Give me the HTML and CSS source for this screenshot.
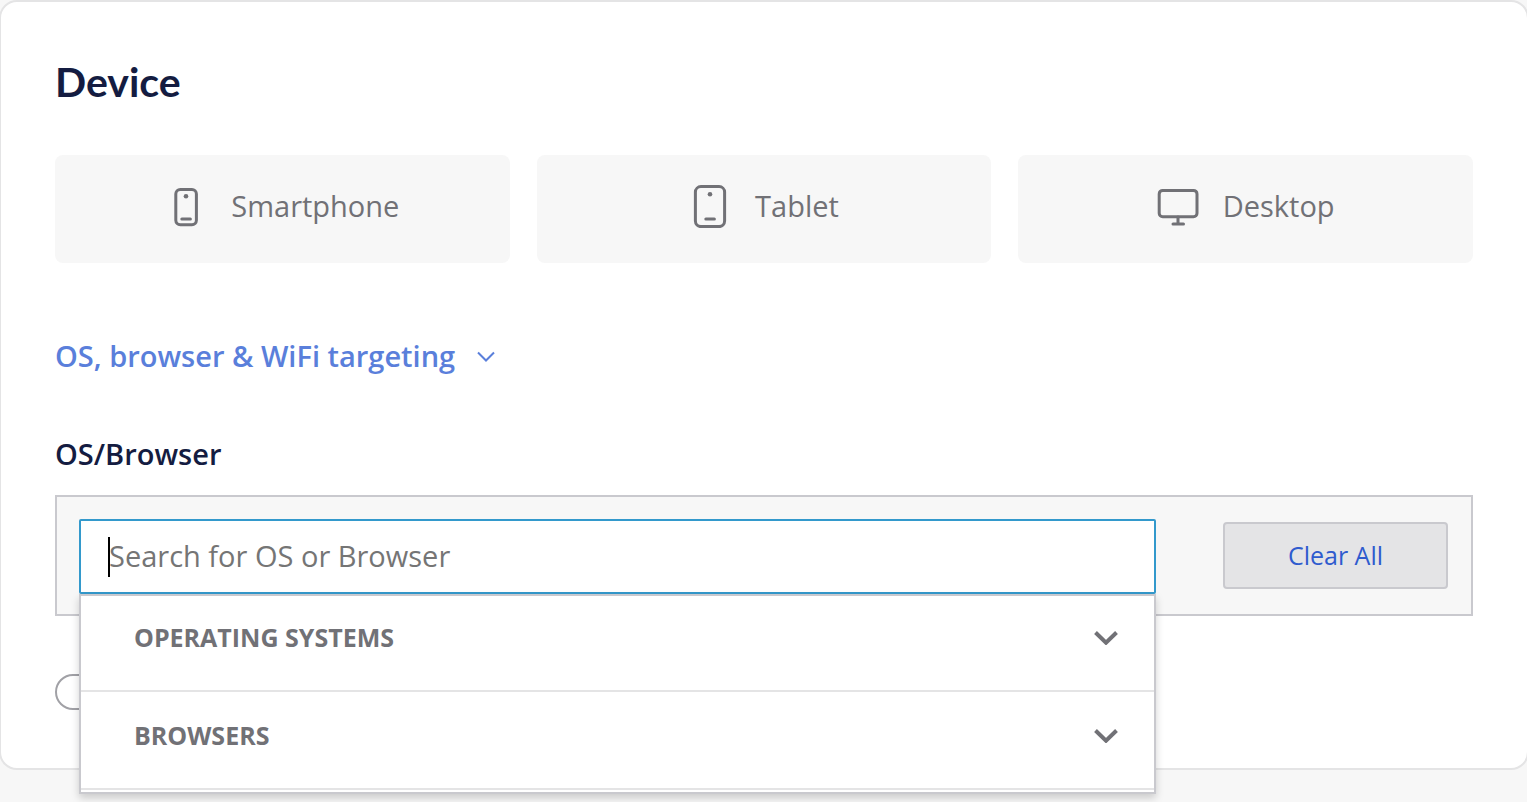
FILE: index.html
```html
<!DOCTYPE html>
<html lang="en">
<head>
  <meta charset="UTF-8" />
  <meta name="viewport" content="width=device-width, initial-scale=1.0"/>
  <title>Device targeting</title>
  <link rel="stylesheet" href="styles.css">
</head>

<body>
  <section class="card">
    <h2 class="card-title">Device</h2>

    <div class="devices">
      <button type="button" class="device">
        <svg class="device-icon" viewBox="0 0 42 44" aria-hidden="true">
          <rect x="10.8" y="5.5" width="20.6" height="35.2" rx="4.5"/>
          <path d="M16.8 35h8.6"/>
          <circle cx="21" cy="12.2" r="2.3"/>
        </svg>
        Smartphone
      </button>
      <button type="button" class="device">
        <svg class="device-icon" viewBox="0 0 42 44" aria-hidden="true">
          <rect x="6.4" y="2.6" width="29.2" height="40" rx="5.5"/>
          <path d="M16.8 35h8.6"/>
          <circle cx="21" cy="10.2" r="2.3"/>
        </svg>
        Tablet
      </button>
      <button type="button" class="device">
        <svg class="device-icon" viewBox="0 0 42 44" aria-hidden="true">
          <rect x="2.2" y="6.4" width="37.8" height="26.4" rx="3.5"/>
          <path d="M21 33v7M16 40h10.5"/>
        </svg>
        Desktop
      </button>
    </div>

    <a href="#targeting" class="toggle-link">
      OS, browser &amp; WiFi targeting
      <svg class="link-arrow" viewBox="0 0 18 12" aria-hidden="true"><path d="M1 2.5l8 8 8-8"/></svg>
    </a>

    <div id="targeting">
      <label class="field-label" for="os-search">OS/Browser</label>

      <div class="search-panel">
        <div class="search">
          <input type="text" id="os-search" class="search-input" placeholder="Search for OS or Browser">
          <ul class="menu">
            <li>
              <button type="button" class="menu-item">
                OPERATING SYSTEMS
                <svg class="menu-arrow" viewBox="0 0 24 16" aria-hidden="true"><path d="M1.5 3.5L12 13.7 22.5 3.5"/></svg>
              </button>
            </li>
            <li>
              <button type="button" class="menu-item">
                BROWSERS
                <svg class="menu-arrow" viewBox="0 0 24 16" aria-hidden="true"><path d="M1.5 3.5L12 13.7 22.5 3.5"/></svg>
              </button>
            </li>
          </ul>
        </div>
        <button type="button" class="clear">Clear All</button>
      </div>

      <input type="checkbox" class="switch" aria-label="WiFi">
    </div>
  </section>
</body>
</html>
```
FILE: styles.css
```css
* {
  box-sizing: border-box;
}

body {
  margin: 0;
  min-height: 100vh;
  background: #f7f7f7;
  font-family: "Open Sans", sans-serif;
  font-size: 29px;
  line-height: 40px;
  color: #717176;
  overflow-x: hidden;
}

button,
input {
  font: inherit;
  color: inherit;
}

.card {
  margin: 0 -2px 0 -1px;
  padding: 56px 54px 58px;
  background: #fff;
  border: 2px solid #e4e4e5;
  border-radius: 18px;
}

.card-title {
  margin: 0 0 49px;
  font-family: Lato, sans-serif;
  font-size: 41px;
  line-height: 48px;
  font-weight: 700;
  color: #141c41;
}

.devices {
  display: grid;
  grid-template-columns: repeat(3, 1fr);
  gap: 27px;
  margin-bottom: 73px;
}

.device {
  display: flex;
  justify-content: center;
  align-items: center;
  gap: 24px;
  padding: 29px 0 35px;
  background: #f7f7f7;
  border: none;
  border-radius: 8px;
  cursor: pointer;
}

.device-icon {
  width: 42px;
  height: 44px;
  fill: none;
  stroke: #717176;
  stroke-width: 3;
  stroke-linecap: round;
}

.device-icon circle {
  fill: #717176;
  stroke: none;
}

.toggle-link {
  display: flex;
  align-items: center;
  gap: 22px;
  width: fit-content;
  margin-bottom: 58px;
  font-weight: 600;
  color: #5a7fdb;
  text-decoration: none;
}

.link-arrow {
  width: 18px;
  height: 12px;
  fill: none;
  stroke: currentColor;
  stroke-width: 2;
}

.field-label {
  display: block;
  margin-bottom: 21px;
  font-weight: 600;
  color: #141c41;
}

.search-panel {
  display: flex;
  align-items: center;
  gap: 67px;
  margin-bottom: 58px;
  padding: 22px 23px 20px 22px;
  background: #f7f7f7;
  border: 2px solid #c9c9ce;
}

.search {
  position: relative;
  flex: 1;
}

/* text cursor of the open search box */
.search::before {
  content: "";
  position: absolute;
  top: 18px;
  left: 29px;
  width: 2px;
  height: 40px;
  background: #000;
}

.search-input {
  display: block;
  width: 100%;
  height: 75px;
  padding: 0 28px 2px;
  background: #fff;
  border: 2px solid #3399cc;
  border-radius: 2px;
  outline: none;
}

.search-input::placeholder {
  color: #757575;
  opacity: 1;
}

.menu {
  position: absolute;
  top: 100%;
  left: 0;
  right: 0;
  margin: 0;
  padding: 0 0 2px;
  list-style: none;
  background: #fff;
  border: 2px solid #c9c9ce;
  box-shadow: 0 4px 8px rgba(0, 0, 0, 0.18);
}

.menu-item {
  display: flex;
  justify-content: space-between;
  align-items: center;
  width: 100%;
  padding: 23px 36px 33px 53px;
  background: none;
  border: none;
  border-bottom: 2px solid #e4e4e5;
  font-size: 25px;
  font-weight: 700;
  cursor: pointer;
}

.menu li:first-child .menu-item {
  padding-top: 21px;
}

.menu-arrow {
  width: 24px;
  height: 16px;
  fill: none;
  stroke: currentColor;
  stroke-width: 4;
}

.clear {
  width: 225px;
  height: 67px;
  margin-bottom: 2px;
  padding: 0 0 2px;
  background: #e4e4e6;
  border: 2px solid #c9c9ce;
  border-radius: 4px;
  font-size: 25px;
  color: #2f5bce;
  cursor: pointer;
}

.switch {
  appearance: none;
  display: block;
  width: 68px;
  height: 36px;
  margin: 0;
  background: #fff;
  border: 2px solid #a1a1a6;
  border-radius: 18px;
}
```
